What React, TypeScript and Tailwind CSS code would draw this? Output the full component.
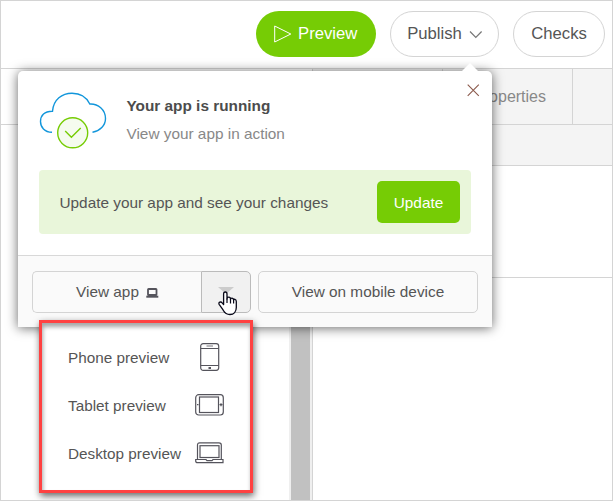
import React from "react";

const outlineButton =
  "flex items-center justify-center border border-[#d4d4d4] text-[#555]";

function CloudIcon() {
  return (
    <svg width="70" height="60" viewBox="0 0 70 60" fill="none" className="shrink-0">
      <path
        d="M13 39.7C5.500 39.700 1.500 34.500 1.500 29C1.500 23 5.500 18.500 13.500 18.700C14.500 7 23 .700 33 .700C41 .700 47.500 4.500 50.800 11.500C59 11 66.500 17 66.500 26C66.500 33 61 38.500 53.500 39.800"
        stroke="#1296db"
        strokeWidth="1.4"
        transform="translate(0 .5)"
      />
      <circle cx="33.700" cy="40.800" r="15" fill="#f5fbef" stroke="#76cc05" strokeWidth="1.400" />
      <path d="M26.200 39.100L32.400 45.300L41.700 36.100" stroke="#76cc05" strokeWidth="1.400" />
    </svg>
  );
}

function PhoneIcon() {
  return (
    <svg width="20" height="28" viewBox="0 0 20 28" fill="none" stroke="#55545c" strokeWidth="1.200">
      <rect x=".7" y=".7" width="18" height="26.600" rx="2.500" />
      <path d="M.7 5.500H18.700M.7 22.500H18.700" />
      <path d="M6.500 3H13" strokeWidth="1.500" opacity=".55" />
      <rect x="8.500" y="24" width="2.500" height="2" fill="#55545c" stroke="none" />
    </svg>
  );
}

function TabletIcon() {
  return (
    <svg width="30" height="22" viewBox="0 0 30 22" fill="none" stroke="#55545c" strokeWidth="1.200">
      <rect x=".7" y=".7" width="27.600" height="20.300" rx="3" />
      <rect x="4.500" y="3" width="19" height="15.500" />
      <path d="M2 10.700H3.500M24.500 10.700H27.500M26 9.300V12.200" />
    </svg>
  );
}

function DesktopIcon() {
  return (
    <svg width="30" height="22" viewBox="0 0 30 22" fill="none" stroke="#55545c" strokeWidth="1.200">
      <path d="M2.500 17V3Q2.500 .8 4.700 .8H24Q26.300 .8 26.300 3V17" />
      <rect x="5" y="3.700" width="19" height="11.800" />
      <path d="M.7 17.500H11L12 18.700H17L18 17.500H28V20.700H2.500Q.7 20.700 .7 19Z" />
    </svg>
  );
}

function Header() {
  return (
    <header className="flex h-[68px] items-start gap-[14px] border-b border-[#d4d4d4] bg-white pt-[10px] pl-[255px] text-[16.7px]">
      <button className="flex h-[46px] w-[120px] items-center rounded-full bg-[#76cc05] pl-[18px] text-white">
        <svg width="18" height="18" viewBox="0 0 18 18" fill="none" stroke="white" className="mr-[6px]">
          <path d="M.7 1L16.800 9L.7 17Z" />
        </svg>
        Preview
      </button>
      <button className={`${outlineButton} h-[46px] w-[109px] gap-[7px] rounded-full pl-px`}>
        Publish
        <svg width="14" height="9" viewBox="0 0 14 9" fill="none" stroke="#777" strokeWidth="1.200">
          <path d="M1 1.500L6.800 7.500L12.600 1.500" />
        </svg>
      </button>
      <button className={`${outlineButton} h-[46px] w-[92px] rounded-full`}>Checks</button>
    </header>
  );
}

function Workspace() {
  return (
    <main className="flex h-[431px]">
      <section className="flex w-[312px] flex-col border-r border-[#d4d4d4]">
        <div className="h-[56px] border-b border-[#d4d4d4]" />
        <div className="flex flex-1 justify-end">
          <div className="w-[23px] border-x-2 border-[#efefef] bg-[#c1c1c1]" />
        </div>
      </section>
      <section className="flex flex-1 flex-col">
        <div className="flex h-[56px] border-b border-[#d4d4d4] bg-[#f4f4f4] text-[16px] text-[#888]">
          <div className="w-[130px] border-r border-[#d4d4d4]" />
          <div className="flex w-[130px] items-center justify-end border-r border-[#d4d4d4] pr-[26px]">
            Properties
          </div>
        </div>
        <div className="h-[41px] border-b border-[#d4d4d4] bg-[#f4f4f4]" />
        <div className="h-[112px] border-b border-[#d4d4d4]" />
      </section>
    </main>
  );
}

function RunningPopup() {
  return (
    <div className="absolute top-[71px] left-[18px] h-[256px] w-[474px] rounded-t-[5px] bg-white shadow-[0_1px_12px_rgba(0,0,0,0.6)]">
      <svg width="18" height="9" viewBox="0 0 18 9" className="absolute -top-[8px] left-[443px]">
        <path d="M0 9L9 0L18 9Z" fill="white" />
      </svg>
      <svg width="13" height="13" viewBox="0 0 13 13" fill="none" stroke="#8b5a4c" strokeWidth="1.100" className="absolute top-[13px] left-[449px]">
        <path d="M.7 .7L11.800 11.800M11.800 .7L.7 11.800" />
      </svg>
      <div className="flex h-[99px] pt-[21px] pl-[21px]">
        <CloudIcon />
        <div className="pt-[2px] pl-[17.500px] text-[15.350px] leading-[24px]">
          <h1 className="font-bold text-[#4c4c4c]">Your app is running</h1>
          <p className="pt-[4px] text-[#888]">View your app in action</p>
        </div>
      </div>
      <div className="mx-[21px] flex h-[64px] items-center justify-between rounded-[4px] bg-[#e9f6da] pr-[11px] pl-[20.500px] text-[15.350px] text-[#555]">
        <span className="pt-[2px]">Update your app and see your changes</span>
        <button className="h-[42px] w-[83px] rounded-[5px] bg-[#76cc05] pt-[2px] text-white">Update</button>
      </div>
      <footer className="mt-[21px] flex h-[72px] gap-[7px] border-t border-[#d8d8d8] bg-[#fafafa] pt-[15px] pl-[14px] text-[15.350px]">
        <div className="flex h-[42px] w-[219px]">
          <button className={`${outlineButton} w-[169px] gap-[7px] rounded-l-[5px] border-r-0 pl-px`}>
            View app
            <svg width="13" height="10" viewBox="0 0 13 10" fill="none" stroke="#55545c" strokeWidth="1.800" className="mt-[2px]">
              <rect x="2" y="1" width="8.500" height="6" rx=".6" />
              <path d="M.3 8.700H12.300" strokeWidth="2" />
            </svg>
          </button>
          <button className="flex w-[50px] items-center justify-center rounded-r-[5px] border border-[#bbb] bg-[#f1f1f1]">
            <svg width="16" height="7" viewBox="0 0 16 7" className="-mt-[4px]">
              <path d="M0 0H16L8 7Z" fill="#ccc" />
            </svg>
          </button>
        </div>
        <button className={`${outlineButton} h-[42px] w-[220px] rounded-[5px]`}>
          View on mobile device
        </button>
      </footer>
    </div>
  );
}

function PreviewMenu() {
  const items = [
    { label: "Phone preview", icon: <PhoneIcon /> },
    { label: "Tablet preview", icon: <TabletIcon /> },
    { label: "Desktop preview", icon: <DesktopIcon /> },
  ];
  return (
    <ul className="absolute top-[320px] left-[39px] h-[173px] w-[214px] border-[3px] border-[#ff4141] bg-white pt-[10px] pr-[25px] pl-[26px] text-[15.300px] text-[#555] shadow-[1px_3px_7px_rgba(0,0,0,0.6),inset_1px_4px_4px_rgba(0,0,0,0.35)]">
      {items.map((item) => (
        <li key={item.label} className="flex h-[48px] items-center justify-between">
          <span className="pt-[2px] whitespace-nowrap">{item.label}</span>
          <span className="flex w-[30px] justify-center">{item.icon}</span>
        </li>
      ))}
    </ul>
  );
}

function HandCursor() {
  return (
    <svg width="20" height="25" viewBox="0 0 20 25" className="absolute top-[290.500px] left-[217.500px]">
      <path
        d="M5.600 13.500V3Q5.600 1 7.300 1Q9 1 9 3V8Q9 6.200 10.800 6.200Q12.500 6.200 12.500 8.200Q12.700 7 14 7.100Q15.600 7.300 15.600 9Q15.900 8.100 17 8.300Q18.300 8.600 18.300 10.400V16.500C18.300 20.500 15.800 23.500 12 23.500C8.500 23.500 6.700 22 5.400 19.500C4.300 17.300 2.600 15.500 1.300 13.600Q.300 11.800 1.800 11.100Q3.200 10.600 4.400 12.100Z"
        fill="white"
        stroke="#080818"
        strokeWidth="1.300"
        strokeLinejoin="round"
      />
      <path d="M9 7.500V12M12.500 8V12.500M15.600 9V12.500" stroke="#080818" strokeWidth="1.200" />
    </svg>
  );
}

export default function App() {
  return (
    <div className="relative h-[501px] w-[613px] overflow-hidden border border-[#d4d4d4] bg-white font-['Liberation_Sans',Arial,sans-serif]">
      <Header />
      <Workspace />
      <div className="absolute -top-px -left-px">
        <RunningPopup />
        <PreviewMenu />
        <HandCursor />
      </div>
    </div>
  );
}
